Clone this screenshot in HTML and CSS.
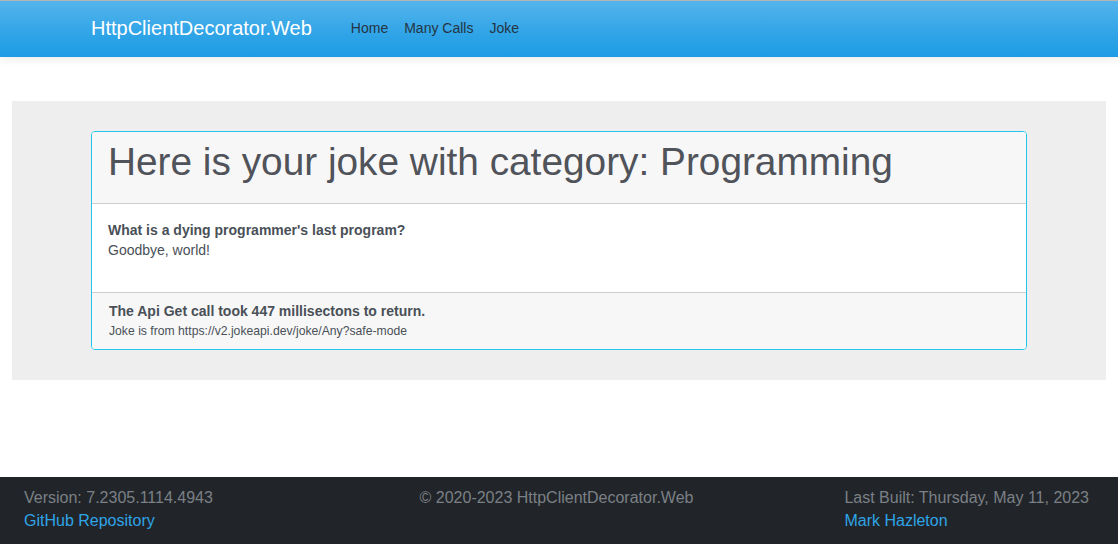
FILE: index.html
```html
<!DOCTYPE html>
<html lang="en">
<head>
<meta charset="utf-8">
<title>Joke - HttpClientDecorator.Web</title>
<link rel="stylesheet" href="styles.css">
</head>
<body>
<header class="navbar">
  <div class="nav-inner">
    <a class="brand" href="#">HttpClientDecorator.Web</a>
    <ul class="nav-links">
      <li><a href="#">Home</a></li>
      <li><a href="#">Many Calls</a></li>
      <li><a href="#">Joke</a></li>
    </ul>
  </div>
</header>
<main class="main">
  <section class="jumbotron">
    <div class="card">
      <div class="card-header">
        <h1>Here is your joke with category: Programming</h1>
      </div>
      <div class="card-body">
        <p class="setup">What is a dying programmer's last program?</p>
        <p class="delivery">Goodbye, world!</p>
      </div>
      <div class="card-footer">
        <p class="timing">The Api Get call took 447 millisectons to return.</p>
        <p class="source">Joke is from https://v2.jokeapi.dev/joke/Any?safe-mode</p>
      </div>
    </div>
  </section>
</main>
<footer class="site-footer">
  <div class="col col-left">
    <span class="muted">Version: 7.2305.1114.4943</span>
    <a href="#">GitHub Repository</a>
  </div>
  <div class="col col-center">
    <span class="muted">© 2020-2023 HttpClientDecorator.Web</span>
  </div>
  <div class="col col-right">
    <div class="right-block">
      <span class="muted">Last Built: Thursday, May 11, 2023</span>
      <a href="#">Mark Hazleton</a>
    </div>
  </div>
</footer>
</body>
</html>
```
FILE: styles.css
```css
html, body {
  margin: 0;
  padding: 0;
}
body {
  font-family: "Liberation Sans", Arial, sans-serif;
  font-size: 14px;
  color: #495057;
  background: #fff;
  min-height: 100vh;
  display: flex;
  flex-direction: column;
}
a {
  text-decoration: none;
}
.navbar {
  height: 56px;
  border-top: 1px solid #b5b5b5;
  background: linear-gradient(to bottom, #54b4eb 0%, #2fa4e7 60%, #1d9ce5 100%);
  box-shadow: 0 1px 10px rgba(0, 0, 0, 0.1);
  position: relative;
  z-index: 1;
}
.nav-inner {
  display: flex;
  align-items: center;
  height: 100%;
  padding-left: 91px;
  padding-bottom: 2px;
  box-sizing: border-box;
}
.brand {
  color: #fff;
  font-size: 20px;
  margin-right: 31px;
}
.nav-links {
  display: flex;
  list-style: none;
  margin: 0;
  padding: 0;
}
.nav-links a {
  display: block;
  padding: 0 8px;
  color: #243442;
  font-size: 14px;
}
.main {
  padding-top: 44px;
}
.jumbotron {
  margin: 0 12px;
  background: #eeeeee;
  padding: 30px 0 30px;
}
.card {
  width: 934px;
  margin: 0 auto;
  border: 1px solid #22c6ec;
  border-radius: 4px;
  background: #fff;
  overflow: hidden;
}
.card-header {
  background: #f7f7f7;
  padding: 6px 16px 17px;
  border-bottom: 1px solid #cfcfcf;
}
.card-header h1 {
  margin: 0;
  font-size: 38.8px;
  font-weight: 400;
  line-height: 48px;
  color: #505359;
}
.card-body {
  padding: 16px;
}
.card-body p {
  margin: 0;
  line-height: 20px;
}
.setup {
  font-weight: 700;
}
.delivery {
  margin-bottom: 16px !important;
}
.card-footer {
  background: #f7f7f7;
  border-top: 1px solid #cfcfcf;
  padding: 8px 17px 8px;
}
.card-footer p {
  margin: 0;
}
.timing {
  font-weight: 700;
  line-height: 20px;
}
.source {
  font-size: 12.2px;
  line-height: 20px;
}
.site-footer {
  margin-top: auto;
  background: #212529;
  height: 67px;
  box-sizing: border-box;
  padding: 9px 29px 0 24px;
  display: flex;
  justify-content: space-between;
  font-size: 16px;
  line-height: 23px;
}
.col {
  display: flex;
  flex-direction: column;
  flex: 1;
}
.col-center {
  align-items: center;
}
.col-right {
  align-items: flex-end;
}
.right-block {
  display: flex;
  flex-direction: column;
  align-items: flex-start;
}
.muted {
  color: #7b8086;
}
.site-footer a {
  color: #2fa4e7;
}
```
